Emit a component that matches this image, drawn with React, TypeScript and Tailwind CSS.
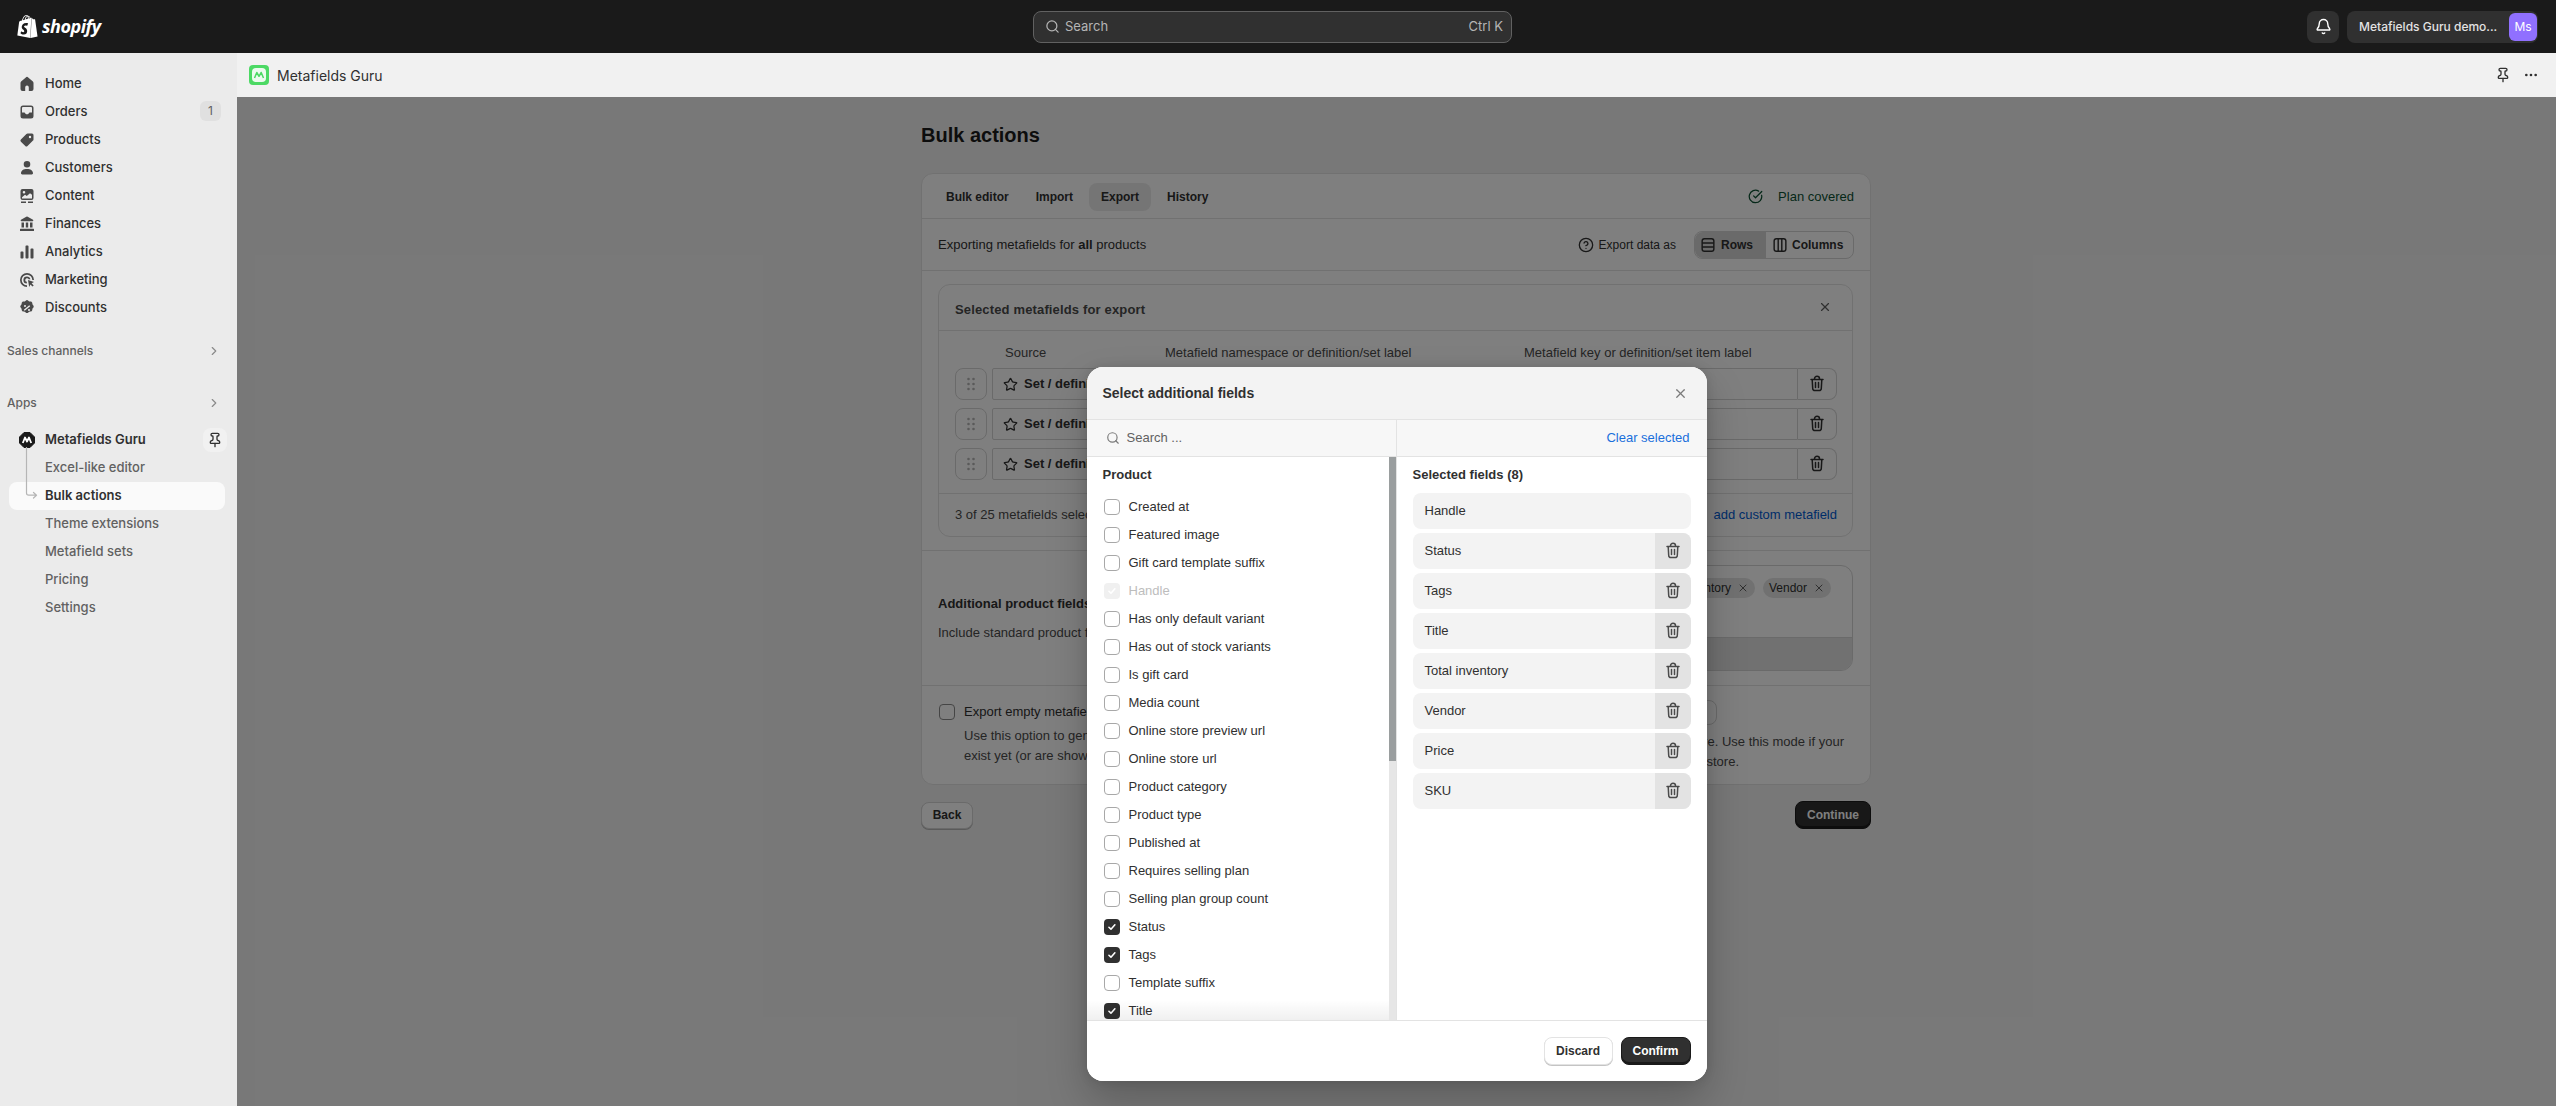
import { Bell, ChevronRight, CircleCheckBig, CircleHelp, Ellipsis, Pin, Search, Star, X } from "lucide-react";
import { SiShopify } from "react-icons/si";

function TrashIcon({ className = "w-5 h-5" }: { className?: string }) {
  return (
    <svg viewBox="0 0 20 20" fill="none" stroke="currentColor" strokeWidth="1.5" strokeLinecap="round" strokeLinejoin="round" className={className}>
      <path d="M7.5 5.5V4.8a2.5 2.5 0 0 1 5 0v.7M4 5.5h12M5.2 5.5l.5 9a2.2 2.2 0 0 0 2.2 2.1h4.2a2.2 2.2 0 0 0 2.2-2.1l.5-9M8.5 8.5v5M11.5 8.5v5" />
    </svg>
  );
}

function GripDots() {
  return (
    <svg viewBox="0 0 20 20" fill="currentColor" className="w-5 h-5">
      <circle cx="7.5" cy="5" r="1.3" /><circle cx="12.5" cy="5" r="1.3" />
      <circle cx="7.5" cy="10" r="1.3" /><circle cx="12.5" cy="10" r="1.3" />
      <circle cx="7.5" cy="15" r="1.3" /><circle cx="12.5" cy="15" r="1.3" />
    </svg>
  );
}

const navIcons: Record<string, React.ReactNode> = {
  Home: <path d="M8.8 3.4a1.8 1.8 0 0 1 2.4 0l4.7 4.1c.4.4.6.9.6 1.4V15a2 2 0 0 1-2 2h-2.7v-3.6a1.8 1.8 0 0 0-3.6 0V17H5.5a2 2 0 0 1-2-2V8.9c0-.5.2-1 .6-1.4z" />,
  Orders: <path fillRule="evenodd" d="M6 3.5h8A2.5 2.5 0 0 1 16.5 6v8a2.5 2.5 0 0 1-2.5 2.5H6A2.5 2.5 0 0 1 3.5 14V6A2.5 2.5 0 0 1 6 3.5zM6 5a1 1 0 0 0-1 1v4.5h2.2c.5 0 .9.3 1 .7.2.6.9 1 1.8 1s1.6-.4 1.8-1c.1-.4.5-.7 1-.7H15V6a1 1 0 0 0-1-1z" />,
  Products: <path fillRule="evenodd" d="M10.6 3.5H15A1.5 1.5 0 0 1 16.5 5v4.4c0 .5-.2.9-.5 1.2l-5.5 5.5a1.6 1.6 0 0 1-2.2 0l-4.4-4.4a1.6 1.6 0 0 1 0-2.2L9.4 4c.3-.3.8-.5 1.2-.5zM13 8.2a1.2 1.2 0 1 0 0-2.4 1.2 1.2 0 0 0 0 2.4z" />,
  Customers: <path d="M10 3a3.3 3.3 0 1 1 0 6.6A3.3 3.3 0 0 1 10 3zM4 15.3c0-2.8 2.6-4.3 6-4.3s6 1.500 6 4.300c0 .7-.5 1.200-1.200 1.200H5.200c-.7 0-1.200-.5-1.200-1.200z" />,
  Content: <path fillRule="evenodd" d="M5.500 3h9A2 2 0 0 1 16.500 5v7a2 2 0 0 1-2 2h-9a2 2 0 0 1-2-2V5a2 2 0 0 1 2-2zM5 11.300V12.500h10V8.800l-2-1.500-3.200 2.700-1.800-1.200zM7 5a1.300 1.300 0 1 0 0 2.600A1.300 1.300 0 0 0 7 5zM4 15.500h5V17H4zM11 15.500h5V17h-5z" />,
  Finances: <path d="M9.300 2.800a1.400 1.400 0 0 1 1.400 0l5.300 3c.6.400.4 1.400-.4 1.400H4.400c-.8 0-1-1-.4-1.400zM4.500 8.500H7v5H4.500zM8.800 8.500h2.400v5H8.800zM13 8.500h2.500v5H13zM3.500 14.800h13c.3 0 .5.200.5.500V17H3v-1.700c0-.3.200-.5.500-.5z" />,
  Analytics: <path d="M9.200 3.500h1.600c.4 0 .7.300.7.700v11.600c0 .4-.3.700-.7.700H9.200a.7.700 0 0 1-.7-.7V4.200c0-.4.300-.7.700-.7zM4.200 9.500h1.600c.4 0 .7.300.7.700v5.600c0 .4-.3.700-.7.700H4.200a.7.700 0 0 1-.7-.7v-5.600c0-.4.300-.7.700-.7zM14.200 6.500h1.600c.4 0 .7.300.7.700v8.600c0 .4-.3.700-.7.700h-1.600a.7.700 0 0 1-.7-.7V7.200c0-.4.300-.7.700-.7z" />,
  Marketing: <path fillRule="evenodd" d="M10 3a7 7 0 0 1 7 7h-1.700A5.300 5.300 0 1 0 10 15.300V17a7 7 0 1 1 0-14zm0 3.500a3.500 3.500 0 0 1 3.400 2.700l-1.700.1A1.800 1.800 0 1 0 9.900 11.800l-.1 1.700A3.500 3.500 0 0 1 10 6.500zm1 3.600 6 2-2.400 1.200 2.100 2.100-1.200 1.200-2.100-2.100-1.200 2.400z" />,
  Discounts: <path fillRule="evenodd" d="M8.700 2.700a1.900 1.900 0 0 1 2.600 0l.9.8 1.200-.1c1 0 1.800.7 1.900 1.700l.1 1.200.8.9c.7.800.7 1.900 0 2.600l-.8.900-.1 1.200a1.900 1.900 0 0 1-1.900 1.700l-1.200.1-.9.800a1.900 1.900 0 0 1-2.600 0l-.9-.8-1.200-.1a1.900 1.900 0 0 1-1.900-1.700l-.1-1.200-.8-.9a1.900 1.900 0 0 1 0-2.600l.8-.9.1-1.200c.1-1 .9-1.700 1.900-1.700l1.200.1zM8 7a1 1 0 1 0 0 2 1 1 0 0 0 0-2zm4 4a1 1 0 1 0 0 2 1 1 0 0 0 0-2zm.3-3.800L6.800 11.700l.9 1.100 5.500-4.500z" />,
};

function NavItem({ label, badge }: { label: string; badge?: string }) {
  return (
    <div className="flex items-center h-[28px] pl-[8px] pr-[4px] gap-[8px] text-[13px] font-[550] text-[#303030]">
      <svg viewBox="0 0 20 20" fill="#4a4a4a" className="w-5 h-5 shrink-0">{navIcons[label]}</svg>
      <span className="flex-1">{label}</span>
      {badge && <span className="w-[21px] h-[20px] -mt-[2px] rounded-[6px] bg-[#e0e0e0] text-[12px] font-normal text-[#616161] flex items-center justify-center">{badge}</span>}
    </div>
  );
}

function Sidebar() {
  const subItems = ["Excel-like editor", "Bulk actions", "Theme extensions", "Metafield sets", "Pricing", "Settings"];
  return (
    <aside className="w-[237px] shrink-0 bg-[#ebebeb] pt-[17px] pl-[9px] pr-[12px]">
      {["Home", "Orders", "Products", "Customers", "Content", "Finances", "Analytics", "Marketing", "Discounts"].map((n) => (
        <NavItem key={n} label={n} badge={n === "Orders" ? "1" : undefined} />
      ))}
      <div className="flex items-center justify-between h-[28px] mt-[15px] -ml-[2px] pr-[4px] text-[12px] font-[550] text-[#616161]">
        Sales channels <ChevronRight className="w-[14px] h-[14px] text-[#8a8a8a]" />
      </div>
      <div className="flex items-center justify-between h-[28px] mt-[24px] -ml-[2px] pr-[4px] text-[12px] font-[550] text-[#616161]">
        Apps <ChevronRight className="w-[14px] h-[14px] text-[#8a8a8a]" />
      </div>
      <div className="relative mt-[9px]">
        <svg className="absolute left-[10px] top-[21px] w-[30px] h-[54px] z-10" viewBox="0 0 30 54" fill="none" stroke="#b5b5b5" strokeWidth="1.2" strokeLinecap="round" strokeLinejoin="round">
          <path d="M7.500 0v46c0 1.500.8 2.200 2.200 2.200H17M14.500 45.500 17.500 48.200 14.500 51" />
        </svg>
        <div className="flex items-center h-[28px] pl-[8px] gap-[8px] text-[13px] font-semibold text-[#303030]">
          <svg viewBox="0 0 20 20" className="w-5 h-5 shrink-0">
            <path d="M7 2.500h6L17.500 7v6L13 17.500H7L2.500 13V7z" fill="#1a1a1a" strokeLinejoin="round" stroke="#1a1a1a" strokeWidth="1" />
            <path d="M5.800 13 8 7.500 10 11.500 12 7.500 14.200 13" fill="none" stroke="#fff" strokeWidth="1.800" strokeLinejoin="round" />
          </svg>
          <span className="flex-1">Metafields Guru</span>
          <span className="w-[24px] h-[24px] -mr-[2px] rounded-[8px] bg-[#f1f1f1] flex items-center justify-center">
            <Pin className="w-[16px] h-[16px] text-[#303030]" />
          </span>
        </div>
        {subItems.map((s) => (
          <div key={s} className={`flex items-center h-[28px] pl-[36px] text-[13px] rounded-[8px] ${s === "Bulk actions" ? "bg-[#fafafa] font-semibold text-[#303030]" : "font-[450] text-[#616161]"}`}>
            {s}
          </div>
        ))}
      </div>
    </aside>
  );
}

function TopBar() {
  return (
    <header className="relative h-[53px] shrink-0 bg-[#1a1a1a] flex items-center justify-between pl-[16px] pr-[18px]">
      <div className="flex items-center gap-[3px] w-[120px] text-white -mt-[1px]">
        <SiShopify className="w-[23px] h-[25px]" />
        <span className="font-['Open_Sans',sans-serif] italic font-bold text-[18px] tracking-[-0.5px] leading-none">shopify</span>
      </div>
      <div className="absolute left-[1033px] w-[479px] h-[32px] rounded-[8px] border border-[#616161] bg-[#303030] flex items-center pl-[11px] pr-[8px] gap-[5px] text-[13px] text-[#b5b5b5]">
        <Search className="w-[15px] h-[15px]" />
        <span className="flex-1">Search</span>
        <span>Ctrl K</span>
      </div>
      <div className="flex items-center gap-[8px]">
        <span className="w-[32px] h-[32px] rounded-[8px] bg-[#303030] flex items-center justify-center">
          <Bell className="w-[17px] h-[17px] text-white" />
        </span>
        <span className="w-[191px] h-[32px] rounded-[8px] bg-[#303030] flex items-center justify-between pl-[12px] pr-[1px] text-[12px] font-medium text-[#e3e3e3]">
          Metafields Guru demo...
          <span className="w-[28px] h-[28px] rounded-[6px] bg-[#9070ff] text-white font-normal flex items-center justify-center">Ms</span>
        </span>
      </div>
    </header>
  );
}

function ExportRow() {
  return (
    <div className="grid grid-cols-[32px_163px_354px_274px_39px] gap-x-[5px] h-[32px]">
      <span className="border border-[#d4d4d4] rounded-[8px] flex items-center justify-center text-[#b5b5b5]"><GripDots /></span>
      <span className="border border-[#d4d4d4] rounded-[2px] flex items-center pl-[10px] gap-[6px] font-bold text-[#303030]"><Star className="w-[15px] h-[15px]" />Set / definition</span>
      <span className="ml-[5px] border border-[#d4d4d4] rounded-[2px]" />
      <span className="ml-[5px] -mr-[5px] border border-[#d4d4d4] rounded-l-[8px]" />
      <span className="border border-l-0 border-[#d4d4d4] rounded-r-[8px] flex items-center justify-center text-[#303030]"><TrashIcon /></span>
    </div>
  );
}

function PageContent() {
  return (
    <div className="w-[950px] ml-[684px] pt-[24px] text-[13px] text-[#303030] font-['Liberation_Sans',Arial,sans-serif]">
      <h1 className="h-[28px] mb-[24px] flex items-center text-[20px] font-bold text-[#1a1a1a]">Bulk actions</h1>
      <section className="bg-white border border-[#e3e3e3] rounded-[12px]">
        <div className="h-[45px] flex items-center pl-[9px] pr-[16px] pt-[1px] border-b border-[#e3e3e3]">
          <div className="flex-1 flex items-center font-bold text-[12px]">
            <span className="h-[28px] px-[15px] flex items-center">Bulk editor</span>
            <span className="h-[28px] px-[12px] flex items-center">Import</span>
            <span className="h-[28px] px-[12px] ml-[4px] flex items-center rounded-[8px] bg-[#ebebeb]">Export</span>
            <span className="h-[28px] px-[16px] flex items-center">History</span>
          </div>
          <span className="flex items-center gap-[15px] text-[#0c5132]"><CircleCheckBig className="w-[15px] h-[15px]" />Plan covered</span>
        </div>
        <div className="h-[52px] flex items-center pl-[16px] pr-[16px] border-b border-[#e3e3e3]">
          <p className="flex-1">Exporting metafields for <b>all</b> products</p>
          <CircleHelp className="w-[16px] h-[16px] mr-[5px]" />
          <span className="mr-[18px] text-[12px]">Export data as</span>
          <div className="flex h-[28px] rounded-[8px] border border-[#d4d4d4] font-bold text-[12px]">
            <span className="w-[70px] flex items-center pl-[4px] gap-[4px] bg-[#d4d4d4] rounded-l-[8px]">
              <svg viewBox="0 0 20 20" fill="none" stroke="currentColor" strokeWidth="1.600" className="w-[18px] h-[18px]"><rect x="3.500" y="3" width="13" height="14" rx="2.500" /><path d="M3.500 7.700h13M3.500 12.300h13" /></svg>
              Rows
            </span>
            <span className="w-[88px] flex items-center pl-[5px] gap-[3px] border-l border-[#d4d4d4]">
              <svg viewBox="0 0 20 20" fill="none" stroke="currentColor" strokeWidth="1.600" className="w-[18px] h-[18px]"><rect x="3.500" y="3" width="13" height="14" rx="2.500" /><path d="M8 3v14M12 3v14" /></svg>
              Columns
            </span>
          </div>
        </div>
        <div className="pl-[16px] pr-[17px] pt-[13px] pb-[13px] border-b border-[#e3e3e3]">
          <div className="border border-[#e3e3e3] rounded-[12px]">
            <div className="h-[46px] flex items-center justify-between pl-[16px] pr-[20px] border-b border-[#e3e3e3] font-bold text-[#4a4a4a]">
              <span className="pt-[4px] tracking-[0.15px]">Selected metafields for export</span>
              <X className="w-[14px] h-[14px] -mt-[2px] text-[#616161]" />
            </div>
            <div className="pl-[16px] pt-[9px]">
              <div className="grid grid-cols-[32px_163px_354px_274px] gap-x-[5px] h-[26px] mb-[2px] items-center text-[#4a4a4a]">
                <span />
                <span className="pl-[13px]">Source</span>
                <span className="ml-[5px]">Metafield namespace or definition/set label</span>
                <span className="ml-[5px] whitespace-nowrap">Metafield key or definition/set item label</span>
              </div>
              <div className="flex flex-col gap-[8px]">
                <ExportRow /><ExportRow /><ExportRow />
              </div>
            </div>
            <div className="mt-[13px] h-[43px] border-t border-[#e3e3e3] flex items-center justify-between pl-[16px] pr-[15px]">
              <span className="text-[#4a4a4a]">3 of 25 metafields selected</span>
              <span className="text-[#005bd3]">add custom metafield</span>
            </div>
          </div>
        </div>
        <div className="h-[135px] flex items-center pl-[16px] pr-[17px] border-b border-[#e3e3e3]">
          <div className="w-[520px]">
            <p className="font-bold mb-[12px] leading-[17px]">Additional product fields</p>
            <p className="text-[#4a4a4a] leading-[17px]">Include standard product fields in the exported file</p>
          </div>
          <div className="flex-1 h-[106px] border border-[#d4d4d4] rounded-[12px] flex flex-col overflow-hidden">
            <div className="flex-1 flex justify-end pt-[12px] pr-[21px] gap-[8px]">
              {["Title", "Total inventory", "Vendor"].map((t) => (
                <span key={t} className="h-[20px] px-[6px] rounded-[10px] bg-[#e3e3e3] flex items-center gap-[6px] text-[12px]">
                  {t}<X className="w-[12px] h-[12px] text-[#616161]" />
                </span>
              ))}
            </div>
            <div className="h-[33px] bg-[#e3e3e3] border-t border-[#d4d4d4]" />
          </div>
        </div>
        <div className="h-[98px] pl-[17px] pr-[26px] pt-[18px] flex">
          <div className="w-[450px] flex gap-[9px]">
            <span className="w-[16px] h-[16px] shrink-0 border border-[#8a8a8a] rounded-[4px]" />
            <div>
              <p className="leading-[16px] h-[22px]">Export empty metafields</p>
              <p className="leading-[20px] text-[#4a4a4a]">Use this option to generate a template</p>
              <p className="leading-[20px] text-[#4a4a4a]">exist yet (or are shown as empty)</p>
            </div>
          </div>
          <div className="flex-1 -mt-[4px]">
            <span className="block w-[80px] h-[25px] ml-[248px] mb-[7px] border border-[#d4d4d4] rounded-[8px]" />
            <p className="leading-[20px] text-[#4a4a4a] text-right">in your store. Use this mode if your</p>
            <p className="w-[350px] leading-[20px] text-[#4a4a4a] text-right">store.</p>
          </div>
        </div>
      </section>
      <div className="flex items-center justify-between mt-[16px]">
        <button className="w-[52px] h-[27px] rounded-[8px] bg-white border border-[#d4d4d4] font-bold text-[12px] shadow-[0_1px_0_#b5b5b5]">Back</button>
        <button className="w-[76px] h-[28px] rounded-[8px] bg-[#303030] border border-[#1a1a1a] text-white font-bold text-[12px] shadow-[inset_0_-2px_0_#1a1a1a]">Continue</button>
      </div>
    </div>
  );
}

type Field = { label: string; checked?: boolean; disabled?: boolean };

const fields: Field[] = [
  { label: "Created at" },
  { label: "Featured image" },
  { label: "Gift card template suffix" },
  { label: "Handle", checked: true, disabled: true },
  { label: "Has only default variant" },
  { label: "Has out of stock variants" },
  { label: "Is gift card" },
  { label: "Media count" },
  { label: "Online store preview url" },
  { label: "Online store url" },
  { label: "Product category" },
  { label: "Product type" },
  { label: "Published at" },
  { label: "Requires selling plan" },
  { label: "Selling plan group count" },
  { label: "Status", checked: true },
  { label: "Tags", checked: true },
  { label: "Template suffix" },
  { label: "Title", checked: true },
];

function Checkbox({ checked, disabled }: { checked?: boolean; disabled?: boolean }) {
  const look = disabled ? "bg-[#f0f0f0]" : checked ? "bg-[#303030]" : "border border-[#a8a8a8] bg-white";
  return (
    <span className={`w-[16px] h-[16px] shrink-0 rounded-[4px] flex items-center justify-center ${look}`}>
      {checked && (
        <svg viewBox="0 0 16 16" fill="none" stroke="#fff" strokeWidth="1.800" strokeLinecap="round" strokeLinejoin="round" className="w-[14px] h-[14px]">
          <path d="m4.500 8.300 2.300 2.200 4.500-5" />
        </svg>
      )}
    </span>
  );
}

function FieldsModal() {
  const selected = ["Handle", "Status", "Tags", "Title", "Total inventory", "Vendor", "Price", "SKU"];
  return (
    <div className="w-[620px] h-[714px] shrink-0 bg-white rounded-[16px] overflow-hidden flex flex-col shadow-[0_20px_40px_rgba(0,0,0,0.22),0_0_12px_rgba(0,0,0,0.12)] text-[13px] text-[#303030] font-['Liberation_Sans',Arial,sans-serif]">
      <div className="h-[53px] shrink-0 bg-[#f3f3f3] border-b border-[#e3e3e3] flex items-center justify-between pl-[16px] pr-[19px]">
        <h2 className="text-[14px] font-bold">Select additional fields</h2>
        <X className="w-[15px] h-[15px] text-[#7a7a7a]" />
      </div>
      <div className="flex-1 min-h-0 grid grid-cols-[310px_310px]">
        <div className="flex flex-col min-h-0 border-r border-[#e3e3e3]">
          <div className="h-[37px] shrink-0 bg-[#f7f7f7] border-b border-[#e3e3e3] flex items-center pl-[19px] gap-[7px] text-[#616161]">
            <Search className="w-[14px] h-[14px] text-[#7a7a7a]" />
            <span>Search ...</span>
          </div>
          <div className="flex-1 min-h-0 flex">
            <div className="relative flex-1 overflow-hidden pl-[16px] pt-[9px]">
              <p className="font-bold h-[18px] flex items-center">Product</p>
              <div className="mt-[9px]">
                {fields.map((f) => (
                  <div key={f.label} className="h-[28px] flex items-center pl-[1px] gap-[9px]">
                    <Checkbox checked={f.checked} disabled={f.disabled} />
                    <span className={f.disabled ? "text-[#bdbdbd]" : ""}>{f.label}</span>
                  </div>
                ))}
              </div>
              <div className="absolute bottom-0 left-0 right-0 h-[20px] bg-gradient-to-b from-transparent to-black/[0.06]" />
            </div>
            <div className="w-[7px] shrink-0 bg-[#e6e6e6]">
              <div className="h-[304px] bg-[#9a9e9f]" />
            </div>
          </div>
        </div>
        <div className="flex flex-col min-h-0">
          <div className="h-[37px] shrink-0 bg-[#f7f7f7] border-b border-[#e3e3e3] flex items-center justify-end pr-[17px] text-[#1a6fdc]">Clear selected</div>
          <div className="flex-1 pl-[16px] pr-[16px] pt-[9px]">
            <p className="font-bold h-[18px] flex items-center">Selected fields (8)</p>
            <div className="mt-[9px] flex flex-col gap-[4px]">
              {selected.map((s, i) => (
                <div key={s} className="h-[36px] rounded-[8px] bg-[#f3f3f3] flex items-center justify-between overflow-hidden pl-[12px]">
                  {s}
                  {i > 0 && <span className="w-[36px] h-full bg-[#e3e3e3] flex items-center justify-center text-[#4a4a4a]"><TrashIcon /></span>}
                </div>
              ))}
            </div>
          </div>
        </div>
      </div>
      <div className="h-[61px] shrink-0 border-t border-[#e3e3e3] bg-white flex items-center justify-end gap-[8px] pr-[16px] font-bold text-[12px]">
        <button className="w-[69px] h-[28px] rounded-[8px] bg-white border border-[#e3e3e3] shadow-[0_1px_0_#c4c4c4]">Discard</button>
        <button className="w-[70px] h-[28px] rounded-[8px] bg-[#303030] border border-[#1a1a1a] text-white shadow-[inset_0_-2px_0_#1a1a1a]">Confirm</button>
      </div>
    </div>
  );
}

export default function App() {
  return (
    <div className="w-full h-screen overflow-hidden flex flex-col bg-[#f1f1f1] font-['Inter',sans-serif]">
      <TopBar />
      <div className="flex-1 min-h-0 flex">
        <Sidebar />
        <main className="flex-1 min-w-0 flex flex-col">
          <div className="h-[44px] shrink-0 flex items-center pl-[12px] pr-[17px] gap-[8px] text-[14px] text-[#303030]">
            <svg viewBox="0 0 20 20" className="w-5 h-5 shrink-0">
              <rect width="20" height="20" rx="4" fill="#4cd964" />
              <rect x="3" y="3" width="14" height="14" rx="4" fill="#ecfbef" />
              <path d="M5.500 13 7.800 7.500 10 11.300 12.200 7.500 14.500 13" fill="none" stroke="#4cd964" strokeWidth="1.500" strokeLinejoin="round" />
            </svg>
            <span className="flex-1">Metafields Guru</span>
            <Pin className="w-[16px] h-[16px] mr-[4px]" />
            <Ellipsis className="w-[16px] h-[16px]" />
          </div>
          <div className="relative flex-1 min-h-0 overflow-hidden">
            <PageContent />
            <div className="absolute inset-0 bg-black/50 flex justify-center pt-[270px]">
              <FieldsModal />
            </div>
          </div>
        </main>
      </div>
    </div>
  );
}
